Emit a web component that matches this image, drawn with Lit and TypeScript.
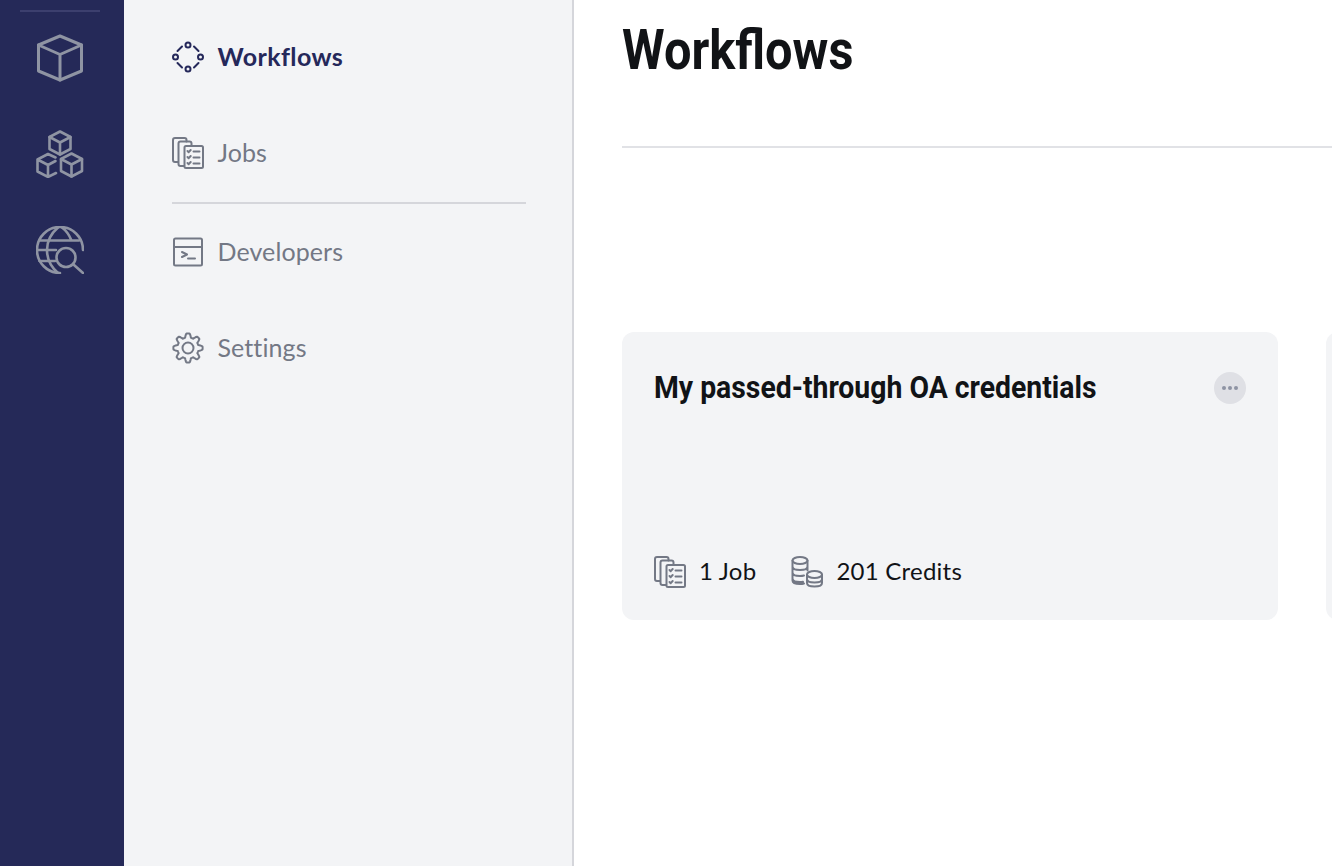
import { LitElement, html, css, svg } from 'lit';
import { customElement } from 'lit/decorators.js';

const jobsIcon = html`<svg class="icon" viewBox="0 0 32 32" fill="none" stroke="currentColor" stroke-width="2" stroke-linecap="round" stroke-linejoin="round">
    <path d="M6 25H3a2 2 0 0 1-2-2V3a2 2 0 0 1 2-2h9.500a2 2 0 0 1 2 2v1.500"/>
    <path d="M12 29H8.500a2 2 0 0 1-2-2V6.500a2 2 0 0 1 2-2h9a2 2 0 0 1 2 2V9"/>
    <rect x="12.500" y="9" width="18.500" height="22" rx="1.500"/>
    <path d="M15.500 14l1.200 1.200 2-2.200M15.500 20l1.200 1.200 2-2.200M15.500 26l1.200 1.200 2-2.200M21.500 14.500h6M21.500 20.500h6M21.500 26.500h6"/>
</svg>`;

const coinsIcon = html`<svg class="icon" viewBox="0 0 32 32" fill="none" stroke="currentColor" stroke-width="2" stroke-linecap="round" stroke-linejoin="round">
    <ellipse cx="9" cy="4.500" rx="7.500" ry="3.500"/>
    <path d="M1.500 4.500v20c0 2 3 3.500 7.500 3.500 1.500 0 3-.2 4-.5M1.500 10.500c0 2 3 3.500 7.500 3.500s7.500-1.500 7.500-3.500M1.500 16.500c0 2 3 3.500 7.500 3.500 1.500 0 3-.2 4-.5M1.500 22.500c0 2 3 3.500 7.500 3.500 1 0 2-.1 3-.3M16.500 4.500v10"/>
    <ellipse cx="23.500" cy="18.500" rx="7.500" ry="3.500"/>
    <path d="M16 18.500v8.500c0 2 3 3.500 7.500 3.500s7.500-1.500 7.500-3.500v-8.500M16 23c0 2 3 3.500 7.500 3.500S31 25 31 23"/>
</svg>`;

const smallCube = (x: number, y: number) => svg`<g transform="translate(${x} ${y})">
    <path d="M0 -11.500L10.500 -6V6L0 11.500 -10.500 6V-6z"/>
    <path d="M-10.500 -6L0 -.5 10.500 -6M0 -.5V11.500"/>
</g>`;

// wavy 8 tooth gear outline, easier to compute than to write out by hand
const gearPath = () => {
    const pts: string[] = [];
    for (let i = 0; i < 160; i++) {
        const a = (i / 160) * Math.PI * 2;
        const wave = Math.max(-1, Math.min(1, Math.cos(a * 8) * 1.6));
        const r = 12.6 + wave * 2;
        pts.push(`${(16 + r * Math.sin(a)).toFixed(2)} ${(16 - r * Math.cos(a)).toFixed(2)}`);
    }
    return `M${pts.join('L')}z`;
};

@customElement('app-root')
export class AppRoot extends LitElement {
    static styles = css`
        :host {
            display: flex;
            height: 866px;
            overflow: hidden;
            background: #fff;
            font-family: Lato, sans-serif;
        }

        .icon {
            width: 32px;
            height: 32px;
            flex: none;
            display: block;
        }

        /* Dark icon rail */
        .rail {
            width: 124px;
            flex: none;
            background: #252958;
            color: #8f94a3;
            display: flex;
            flex-direction: column;
            align-items: center;
            box-sizing: border-box;
            padding: 10px 4px 0 0;
        }
        .rail-line {
            width: 80px;
            height: 2px;
            background: #3c3f6e;
            margin-bottom: 22px;
        }
        .rail .icon {
            width: 48px;
            height: 48px;
            margin-bottom: 48px;
        }

        /* Secondary nav */
        .side {
            width: 450px;
            flex: none;
            box-sizing: border-box;
            background: #f3f4f6;
            border-right: 2px solid #d5d6db;
            padding: 41px 46px 0 48px;
        }
        .nav-item {
            display: flex;
            align-items: center;
            gap: 13.5px;
            height: 32px;
            color: #737885;
            font-size: 25px;
            letter-spacing: 0.1px;
        }
        .nav-item span {
            padding-bottom: 2px;
        }
        .nav-item.active {
            color: #25285a;
            font-weight: 700;
            letter-spacing: 0.4px;
        }
        .nav-gap {
            height: 64px;
        }
        .nav-rule {
            height: 2px;
            background: #d5d6db;
            margin: 33px 0 32px;
        }

        /* Main */
        .main {
            flex: 1;
            min-width: 0;
            padding-left: 48px;
            overflow: hidden;
        }
        h1 {
            margin: 0;
            height: 148px;
            box-sizing: border-box;
            padding-top: 15px;
            border-bottom: 2px solid #e1e2e6;
            font-family: Roboto, sans-serif;
            font-size: 56px;
            line-height: 70px;
            font-weight: 700;
            color: #111316;
        }
        h1 span, .card-title span {
            display: inline-block;
            transform-origin: left center;
            white-space: nowrap;
        }
        h1 span {
            transform: scaleX(0.87);
        }
        .card-title span {
            transform: scaleX(0.915);
        }
        .cards {
            display: flex;
            gap: 48px;
            margin-top: 184px;
            width: 1000px;
        }
        .card {
            width: 656px;
            height: 288px;
            flex: none;
            box-sizing: border-box;
            background: #f3f4f6;
            border-radius: 12px;
            padding: 32px;
            display: flex;
            flex-direction: column;
            justify-content: space-between;
        }
        .card-top {
            display: flex;
            justify-content: space-between;
            align-items: center;
        }
        .card-title {
            font-family: Roboto, sans-serif;
            font-size: 31px;
            line-height: 48px;
            font-weight: 700;
            color: #111316;
        }
        .more {
            width: 32px;
            height: 32px;
            border-radius: 50%;
            background: #dfe0e5;
            display: flex;
            align-items: center;
            justify-content: center;
            gap: 2px;
        }
        .more i {
            width: 4px;
            height: 4px;
            border-radius: 50%;
            background: #8e93a3;
        }
        .stats {
            display: flex;
            align-items: center;
            color: #111316;
            font-size: 24px;
            letter-spacing: 0.25px;
        }
        .stat {
            display: flex;
            align-items: center;
            gap: 13px;
            margin-right: 35px;
        }
        .stat span {
            padding-bottom: 3px;
        }
        .stat .icon {
            color: #737885;
        }
    `;

    render() {
        return html`
            <div class="rail">
                <div class="rail-line"></div>
                <svg class="icon" viewBox="0 0 48 48" fill="none" stroke="currentColor" stroke-width="3" stroke-linecap="round" stroke-linejoin="round">
                    <path d="M24 2l21.500 9v26L24 46 2.500 37V11z"/>
                    <path d="M2.500 11L24 20.500 45.500 11M24 20.500V46"/>
                </svg>
                <svg class="icon" viewBox="0 0 48 48" fill="none" stroke="currentColor" stroke-width="2.600" stroke-linecap="round" stroke-linejoin="round">
                    ${smallCube(24, 13)}
                    <path d="M19.500 27.500L12 24 1.500 29.500v12L12 47l8-4M1.500 29.500L12 35l7.500-4M12 35v12"/>
                    ${smallCube(35.500, 35)}
                </svg>
                <svg class="icon" viewBox="0 0 48 48" fill="none" stroke="currentColor" stroke-width="2.600" stroke-linecap="round" stroke-linejoin="round">
                    <path d="M47 24A23 23 0 1 0 24 47"/>
                    <path d="M22 1.500c-7 6-11 13.500-11 22.500s4 17 11 23M26 1.500c4 3 7 7 9 12"/>
                    <path d="M3.500 14.500H43M1.500 24H20M3.500 35H19"/>
                    <circle cx="30" cy="31.500" r="9.500"/>
                    <path d="M38 39l9 8"/>
                </svg>
            </div>

            <nav class="side">
                <div class="nav-item active">
                    <svg class="icon" viewBox="0 0 32 32" fill="none" stroke="currentColor" stroke-width="2" stroke-linecap="round">
                        <circle cx="16" cy="4" r="2.500"/>
                        <circle cx="16" cy="28" r="2.500"/>
                        <circle cx="3.500" cy="16" r="2.500"/>
                        <circle cx="28.500" cy="16" r="2.500"/>
                        <path d="M10 5.500L5.500 10M22 5.500l4.500 4.500M5.500 22l4.500 4.500M26.500 22L22 26.500"/>
                    </svg>
                    <span>Workflows</span>
                </div>
                <div class="nav-gap"></div>
                <div class="nav-item">${jobsIcon}<span>Jobs</span></div>
                <div class="nav-rule"></div>
                <div class="nav-item">
                    <svg class="icon" viewBox="0 0 32 32" fill="none" stroke="currentColor" stroke-width="2" stroke-linecap="round" stroke-linejoin="round">
                        <rect x="2" y="2.500" width="28" height="27" rx="1.500"/>
                        <path d="M2 11h28M10 16l5 2.500-5 2.500M16 22.500h7"/>
                    </svg>
                    <span>Developers</span>
                </div>
                <div class="nav-gap"></div>
                <div class="nav-item">
                    <svg class="icon" viewBox="0 0 32 32" fill="none" stroke="currentColor" stroke-width="2" stroke-linejoin="round">
                        <path d=${gearPath()}/>
                        <circle cx="16" cy="16" r="5.500"/>
                    </svg>
                    <span>Settings</span>
                </div>
            </nav>

            <main class="main">
                <h1><span>Workflows</span></h1>
                <div class="cards">
                    <div class="card">
                        <div class="card-top">
                            <div class="card-title"><span>My passed-through OA credentials</span></div>
                            <div class="more"><i></i><i></i><i></i></div>
                        </div>
                        <div class="stats">
                            <div class="stat">${jobsIcon}<span>1 Job</span></div>
                            <div class="stat">${coinsIcon}<span>201 Credits</span></div>
                        </div>
                    </div>
                    <div class="card"></div>
                </div>
            </main>
        `;
    }
}
